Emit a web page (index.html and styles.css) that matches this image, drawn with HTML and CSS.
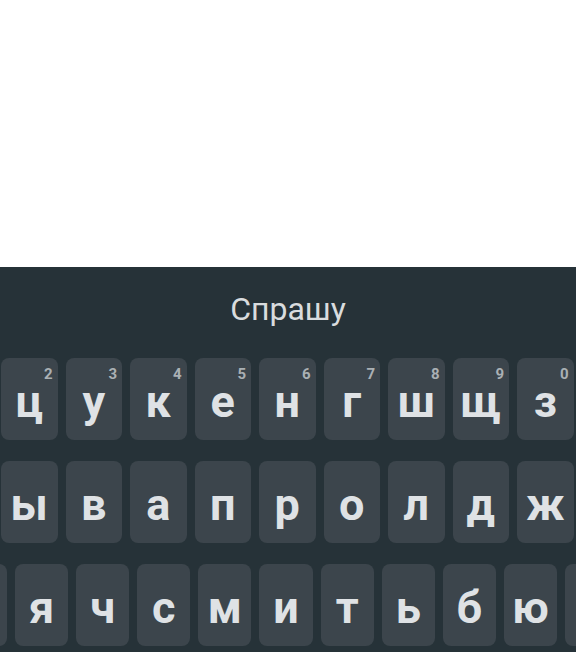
FILE: index.html
```html
<!DOCTYPE html>
<html lang="ru">
<head>
<meta charset="utf-8">
<title>Клавиатура</title>
<link rel="stylesheet" href="styles.css">
</head>
<body>
<div class="screen"></div>
<div class="kb">
  <div class="suggest"><span class="word">Спрашу</span></div>
  <div class="rows">
    <div class="row row1">
      <div class="key">ц<span class="hint">2</span></div>
      <div class="key">у<span class="hint">3</span></div>
      <div class="key">к<span class="hint">4</span></div>
      <div class="key">е<span class="hint">5</span></div>
      <div class="key">н<span class="hint">6</span></div>
      <div class="key">г<span class="hint">7</span></div>
      <div class="key">ш<span class="hint">8</span></div>
      <div class="key">щ<span class="hint">9</span></div>
      <div class="key">з<span class="hint">0</span></div>
    </div>
    <div class="row row2">
      <div class="key">ы</div>
      <div class="key">в</div>
      <div class="key">а</div>
      <div class="key">п</div>
      <div class="key">р</div>
      <div class="key">о</div>
      <div class="key">л</div>
      <div class="key">д</div>
      <div class="key">ж</div>
    </div>
    <div class="row row3">
      <div class="key key-sm"></div>
      <div class="key key-sm">я</div>
      <div class="key key-sm">ч</div>
      <div class="key key-sm">с</div>
      <div class="key key-sm">м</div>
      <div class="key key-sm">и</div>
      <div class="key key-sm">т</div>
      <div class="key key-sm">ь</div>
      <div class="key key-sm">б</div>
      <div class="key key-sm">ю</div>
      <div class="key key-sm"></div>
    </div>
  </div>
</div>
</body>
</html>
```

FILE: styles.css
```css
html, body {
  margin: 0;
  padding: 0;
  background: #ffffff;
}
body {
  width: 576px;
  height: 652px;
  overflow: hidden;
  font-family: Roboto, "Noto Sans", sans-serif;
}
.screen {
  height: 267px;
  background: #ffffff;
}
.kb {
  height: 385px;
  background: #263238;
  overflow: hidden;
}
.suggest {
  height: 83px;
  padding-bottom: 8px;
  display: flex;
  align-items: center;
  justify-content: center;
}
.word {
  font-size: 32px;
  color: #d9dcde;
  line-height: normal;
}
.rows {
  display: flex;
  flex-direction: column;
  gap: 21px;
}
.row {
  display: flex;
  gap: 8px;
  flex-wrap: nowrap;
}
.row1, .row2 {
  margin-left: 1px;
}
.row3 {
  margin-left: -46px;
}
.key {
  position: relative;
  box-sizing: border-box;
  flex: 0 0 56.5px;
  height: 82px;
  padding-top: 4px;
  border-radius: 8px;
  background: #3c454c;
  color: #dfe2e5;
  font-size: 45px;
  font-weight: 700;
  display: flex;
  align-items: center;
  justify-content: center;
  line-height: normal;
}
.key-sm {
  flex-basis: 53.1px;
}
.hint {
  position: absolute;
  top: 7px;
  right: 5px;
  font-size: 15px;
  font-weight: 700;
  color: #aab0b4;
  line-height: normal;
}
```
